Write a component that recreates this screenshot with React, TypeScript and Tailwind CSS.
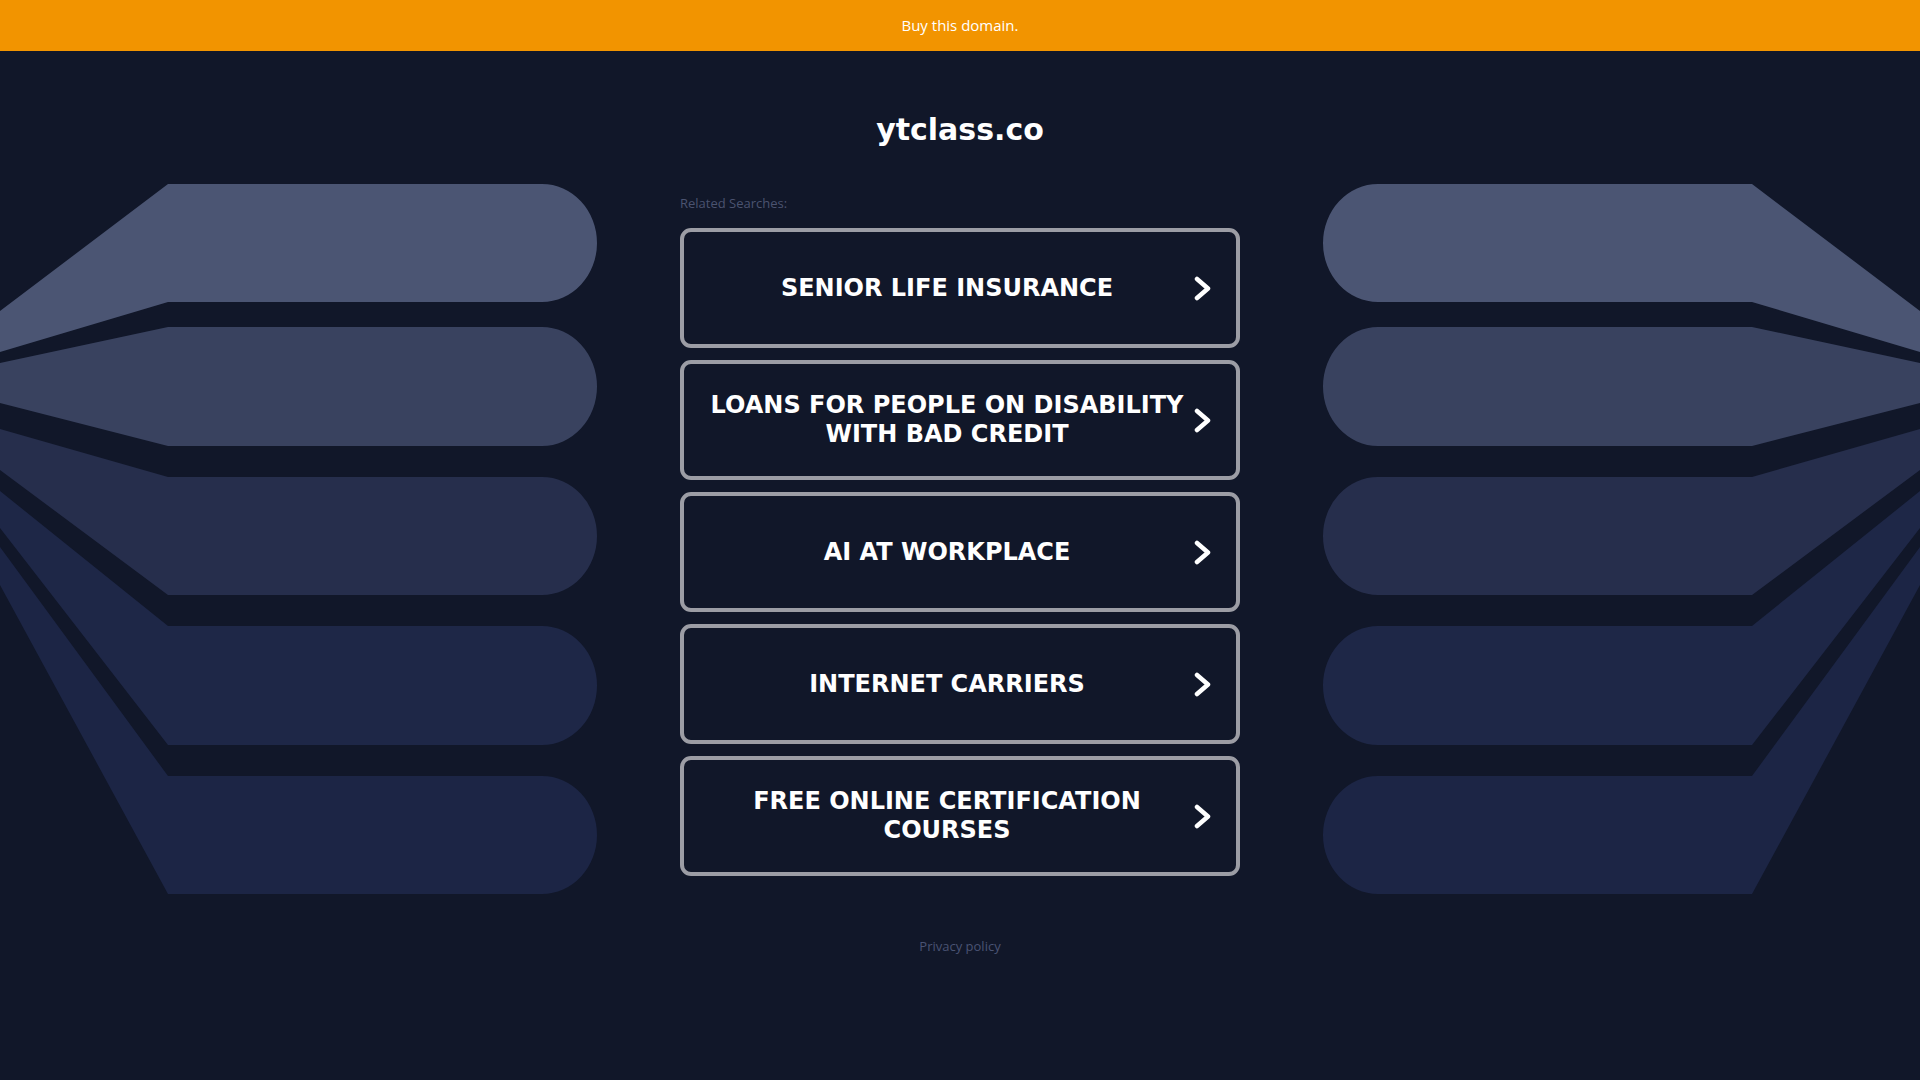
import React from "react"

const searches = [
	"Senior Life Insurance",
	"Loans for People on Disability With Bad Credit",
	"AI at Workplace",
	"Internet Carriers",
	"Free Online Certification Courses",
]

// [top, bottom, leftTop, leftBottom, fill]
const bands: [number, number, number, number, string][] = [
	[184, 302, 311, 352, "#4b5573"],
	[327, 446, 363, 403, "#39425f"],
	[477, 595, 429, 470, "#262e4c"],
	[626, 745, 491, 528, "#1e2747"],
	[776, 894, 547, 585, "#1c2545"],
]

function Bands({ flip }: { flip?: boolean }) {
	return (
		<svg
			viewBox="0 183 597 712"
			className={flip ? "w-[597px] h-[712px] mt-[132px] shrink-0 -scale-x-100" : "w-[597px] h-[712px] mt-[132px] shrink-0"}
		>
			{bands.map(([t, b, a, c, fill]) => (
				<path
					key={t}
					d={`M0,${a} L168,${t} L542,${t} A55,${(b - t) / 2} 0 0 1 542,${b} L168,${b} L0,${c} Z`}
					fill={fill}
				/>
			))}
		</svg>
	)
}

function Chevron() {
	return (
		<svg viewBox="0 0 17 25" className="w-[17px] h-[25px] shrink-0">
			<path
				d="M3,3 L14,12.5 L3,22"
				fill="none"
				stroke="white"
				strokeWidth="4.5"
				strokeLinecap="round"
				strokeLinejoin="round"
			/>
		</svg>
	)
}

export default function App() {
	return (
		<div className="min-h-screen bg-[#111729] font-['Open_Sans',sans-serif]">
			<div className="h-[51px] bg-[#f29400] flex items-center justify-center">
				<a className="text-white text-[15px]" href="#">
					Buy this domain.
				</a>
			</div>
			<div className="flex justify-between">
				<Bands />
				<div className="w-[560px] flex flex-col pt-[61px] pb-[120px]">
					<h1 className="text-center text-white text-[30px] leading-[36px] font-bold font-['DejaVu_Sans',sans-serif]">
						ytclass.co
					</h1>
					<p className="mt-[47px] text-[13px] leading-4 text-[#4b5370]">
						Related Searches:
					</p>
					<div className="mt-[17px] flex flex-col gap-[12px]">
						{searches.map((s) => (
							<a
								key={s}
								href="#"
								className="h-[120px] flex items-center gap-[4px] pl-[20px] pr-[25px] border-4 border-[#9c9da5] rounded-[11px]"
							>
								<span className="flex-1 text-center text-white uppercase font-bold text-2xl leading-[29px] font-['DejaVu_Sans',sans-serif]">
									{s}
								</span>
								<Chevron />
							</a>
						))}
					</div>
					<a href="#" className="mt-[62px] text-center text-[13px] leading-4 text-[#4a5373]">
						Privacy policy
					</a>
				</div>
				<Bands flip />
			</div>
		</div>
	)
}
